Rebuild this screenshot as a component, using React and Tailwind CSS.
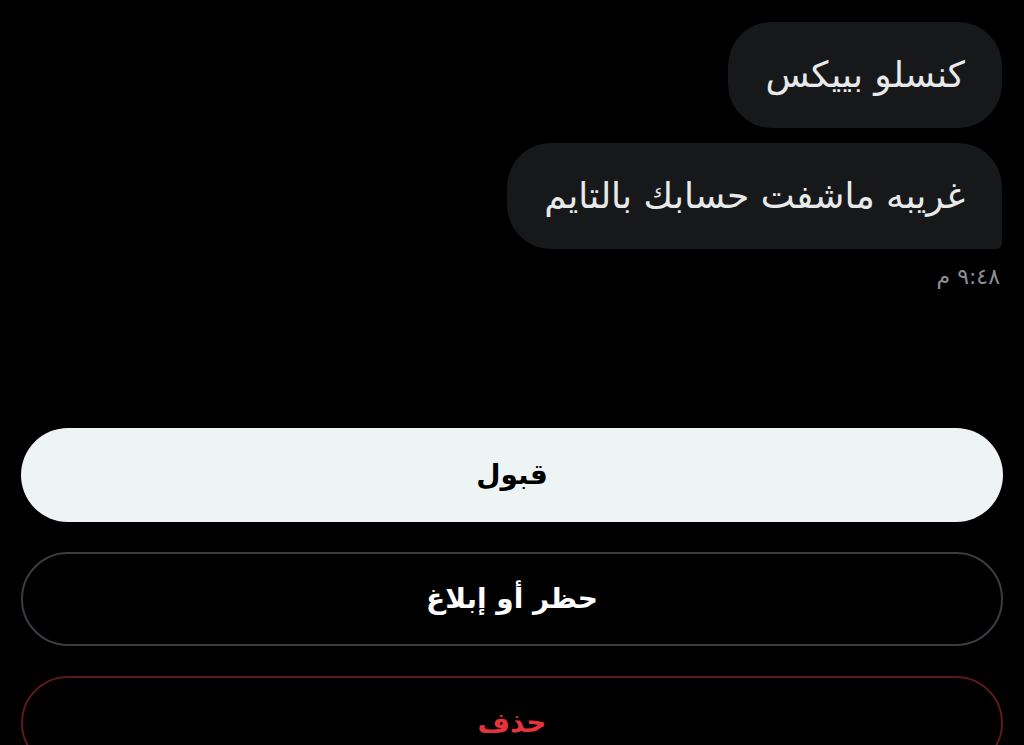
import React from "react";

const messages = ["كنسلو بييكس", "غريبه ماشفت حسابك بالتايم"];

const App = () => {
  return (
    <div
      dir="rtl"
      className="w-[1024px] h-[745px] overflow-hidden bg-black"
      style={{ fontFamily: '"DejaVu Sans", "Noto Sans", sans-serif' }}
    >
      {/* Messages */}
      <div className="flex flex-col items-start gap-[15px] pt-[22px] pr-[22px]">
        {messages.map((m, i) => (
          <div
            key={i}
            className={`h-[106px] flex items-center px-[37px] bg-[#16181a] text-[#e7e9ea] text-[36px] rounded-[44px] ${
              i === messages.length - 1 ? "rounded-br-[6px]" : ""
            }`}
          >
            {m}
          </div>
        ))}
        <p className="text-[22px] text-[#8b8f94] mt-[-4px] pr-[2px]">٩:٤٨ م</p>
      </div>

      {/* Actions */}
      <div className="flex flex-col gap-[30px] px-[21px] mt-[135px]">
        <button className="h-[94px] w-full rounded-full bg-[#eef3f3] text-black text-[28px] font-bold">
          قبول
        </button>
        <button className="h-[94px] w-full rounded-full border-2 border-[#3a3d42] text-white text-[28px] font-bold">
          حظر أو إبلاغ
        </button>
        <button className="h-[94px] w-full rounded-full border-2 border-[#5c1a1e] text-[#e5333c] text-[28px] font-bold">
          حذف
        </button>
      </div>
    </div>
  );
};

export default App;
